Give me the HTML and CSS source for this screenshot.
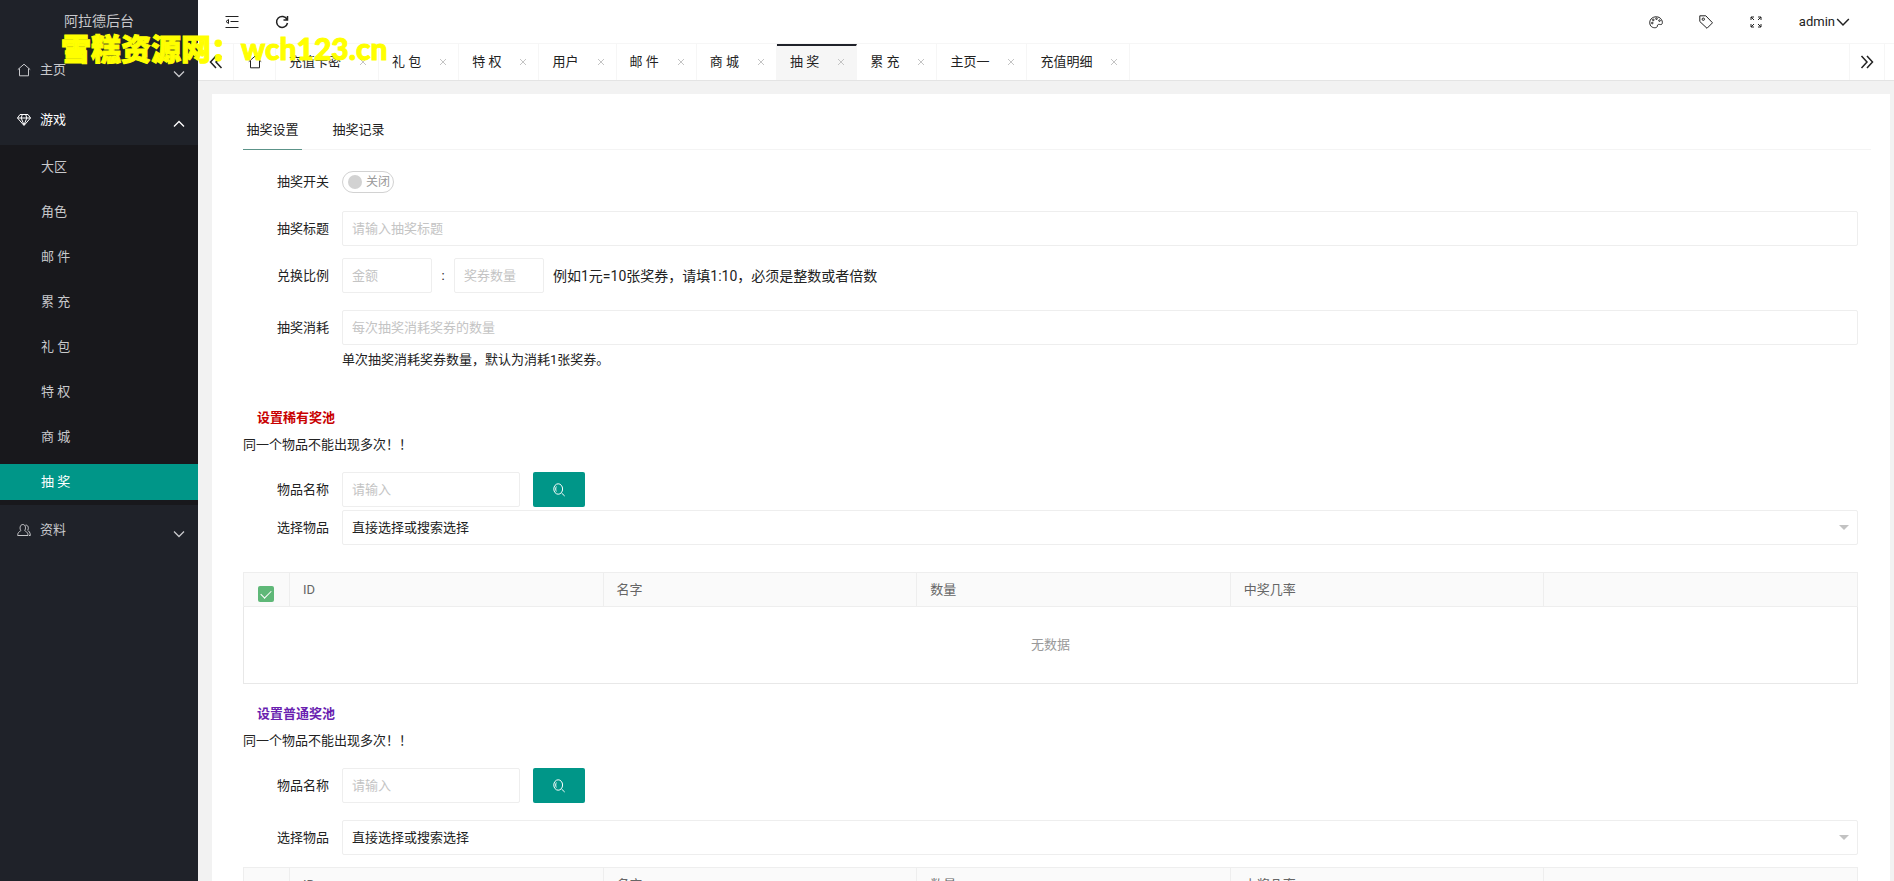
FILE: index.html
```html
<!DOCTYPE html>
<html lang="zh-CN">
<head>
<meta charset="utf-8">
<title>阿拉德后台</title>
<link rel="stylesheet" href="styles.css">
</head>
<body>
<svg class="sprite" aria-hidden="true">
  <symbol id="down" viewBox="0 0 12 12"><path d="M1 3.5 6 8.5 11 3.5"/></symbol>
  <symbol id="home" viewBox="0 0 14 14"><path d="M.8 6.6 7 1.2l6.2 5.4M2.5 5.5v7.3h9V5.5"/></symbol>
  <symbol id="close" viewBox="0 0 8 8"><path d="M1 1l6 6M7 1 1 7"/></symbol>
  <symbol id="search" viewBox="0 0 14 14"><ellipse cx="6.2" cy="6" rx="4.4" ry="5.2"/><path d="M9.5 10l3.200 3M4.300 3.500c-.8 1.500-.8 3.500 0 5"/></symbol>
</svg>
<div class="app">
  <aside class="side">
    <div class="logo">阿拉德后台</div>
    <nav class="nav">
      <a class="nav-item" href="#"><svg class="icon"><use href="#home"/></svg><span>主页</span><svg class="arrow"><use href="#down"/></svg></a>
      <a class="nav-item open" href="#"><svg class="icon" viewBox="0 0 14 14"><path d="M3 1.500h8L13.500 5 7 12.500.5 5zM.5 5h13M4.200 5 7 12l2.800-7M4.200 5 5.300 1.500M9.800 5 8.700 1.500"/></svg><span>游戏</span><svg class="arrow up"><use href="#down"/></svg></a>
      <div class="subnav">
        <a href="#">大区</a>
        <a href="#">角色</a>
        <a href="#">邮 件</a>
        <a href="#">累 充</a>
        <a href="#">礼 包</a>
        <a href="#">特 权</a>
        <a href="#">商 城</a>
        <a class="current" href="#">抽 奖</a>
      </div>
      <a class="nav-item" href="#"><svg class="icon" viewBox="0 0 14 14"><path d="M3.900 7.500C2.400 5.800 2.900 1.500 5.800 1.500s3.400 4.300 1.900 6c1 1.200 3.300 1.300 3.300 5H.7c0-3.700 2.200-3.800 3.200-5zM8.500 2.200c2.600-.6 3.600 3 2.200 5 1 1.100 2.600 1.800 2.600 5.300h-1.300"/></svg><span>资料</span><svg class="arrow"><use href="#down"/></svg></a>
    </nav>
  </aside>
  <div class="body">
    <header class="top">
      <button class="tool" aria-label="收起菜单"><svg class="icon" viewBox="0 0 14 14"><path d="M.5 1.500h13M5.500 6.500h8M.5 12.500h13M3.500 4.500 1 6.500l2.500 2z"/></svg></button>
      <button class="tool" aria-label="刷新"><svg class="icon bold" viewBox="0 0 14 14"><path d="M12 4.400A5.500 5.500 0 1 0 12.500 8M12.500 1v4h-4"/></svg></button>
      <span class="grow"></span>
      <button class="tool" aria-label="主题"><svg class="icon" viewBox="0 0 14 14"><path d="M3.500 12.300C.5 11 .3 7 1.300 5.200 3 1.500 8.500.8 11.300 3.200c2 1.800 2.400 4.200 1.800 5.600-.7 1.400-2.300.4-3.600.6-1.800.4-.6 2.400-2 3-1 .5-2.800.4-4-.1z"/><circle cx="3.300" cy="8" r=".8"/><circle cx="4.300" cy="4.900" r=".8"/><circle cx="7.500" cy="3.700" r=".8"/><circle cx="10.500" cy="5.600" r=".8"/></svg></button>
      <button class="tool" aria-label="便签"><svg class="icon" viewBox="0 0 14 14"><path d="M.8.8h6l6.700 7-5.500 5.500L.8 6.500z"/><circle cx="4.300" cy="4.200" r="1.200"/></svg></button>
      <button class="tool" aria-label="全屏"><svg class="icon" viewBox="0 0 14 14"><path d="M2 5V2h3M2 2l3 3M9 2h3v3M12 2 9 5M2 9v3h3M2 12l3-3M12 9v3H9M12 12 9 9"/></svg></button>
      <button class="user">admin<svg class="arrow"><use href="#down"/></svg></button>
    </header>
    <div class="tabs">
      <button class="tab-tool first" aria-label="向左"><svg class="icon bold" viewBox="0 0 14 14"><path d="M7 1 1.500 7 7 13M12.500 1 7 7l5.500 6"/></svg></button>
      <a class="tab home" href="#" aria-label="主页"><svg class="icon"><use href="#home"/></svg></a>
      <a class="tab" href="#">充值卡密<svg class="x"><use href="#close"/></svg></a>
      <a class="tab" href="#">礼 包<svg class="x"><use href="#close"/></svg></a>
      <a class="tab" href="#">特 权<svg class="x"><use href="#close"/></svg></a>
      <a class="tab" href="#">用户<svg class="x"><use href="#close"/></svg></a>
      <a class="tab" href="#">邮 件<svg class="x"><use href="#close"/></svg></a>
      <a class="tab" href="#">商 城<svg class="x"><use href="#close"/></svg></a>
      <a class="tab active" href="#">抽 奖<svg class="x"><use href="#close"/></svg></a>
      <a class="tab" href="#">累 充<svg class="x"><use href="#close"/></svg></a>
      <a class="tab" href="#">主页一<svg class="x"><use href="#close"/></svg></a>
      <a class="tab" href="#">充值明细<svg class="x"><use href="#close"/></svg></a>
      <span class="grow"></span>
      <button class="tab-tool last" aria-label="向右"><svg class="icon bold" viewBox="0 0 14 14"><path d="M7 1l5.500 6L7 13M1.500 1 7 7l-5.500 6"/></svg></button>
    </div>
    <main class="main">
      <div class="card">
        <div class="card-tabs"><a class="active" href="#">抽奖设置</a><a href="#">抽奖记录</a></div>
        <form class="form">
          <div class="row"><label for="switch">抽奖开关</label><span class="switch"><input type="checkbox" id="switch"><span>关闭</span></span></div>
          <div class="row"><label for="title">抽奖标题</label><input class="field" id="title" type="text" placeholder="请输入抽奖标题"></div>
          <div class="row"><label for="money">兑换比例</label><input class="field small" id="money" type="text" placeholder="金额"><span class="colon">:</span><input class="field small" type="text" aria-label="奖券数量" placeholder="奖券数量"><span class="example">例如1元=10张奖券&#65292;请填1:10&#65292;必须是整数或者倍数</span></div>
          <div class="row cost"><label for="cost">抽奖消耗</label><input class="field" id="cost" type="text" placeholder="每次抽奖消耗奖券的数量"></div>
          <p class="hint">单次抽奖消耗奖券数量&#65292;默认为消耗1张奖券。</p>

          <section class="pool rare">
            <h2>设置稀有奖池</h2>
            <p>同一个物品不能出现多次&#65281;&#65281;</p>
            <div class="row name"><label for="name1">物品名称</label><input class="field medium" id="name1" type="text" placeholder="请输入"><button class="search" type="button" aria-label="搜索"><svg class="icon"><use href="#search"/></svg></button></div>
            <div class="row pick"><label for="pick1">选择物品</label><span class="select"><select id="pick1"><option>直接选择或搜索选择</option></select></span></div>
            <table>
              <thead><tr><th class="check"><input type="checkbox" aria-label="全选" checked></th><th>ID</th><th>名字</th><th>数量</th><th>中奖几率</th><th class="rest"></th></tr></thead>
              <tbody><tr><td colspan="6">无数据</td></tr></tbody>
            </table>
          </section>

          <section class="pool common">
            <h2>设置普通奖池</h2>
            <p>同一个物品不能出现多次&#65281;&#65281;</p>
            <div class="row name"><label for="name2">物品名称</label><input class="field medium" id="name2" type="text" placeholder="请输入"><button class="search" type="button" aria-label="搜索"><svg class="icon"><use href="#search"/></svg></button></div>
            <div class="row pick"><label for="pick2">选择物品</label><span class="select"><select id="pick2"><option>直接选择或搜索选择</option></select></span></div>
            <table>
              <thead><tr><th class="check"><input type="checkbox" aria-label="全选" checked></th><th>ID</th><th>名字</th><th>数量</th><th>中奖几率</th><th class="rest"></th></tr></thead>
              <tbody><tr><td colspan="6">无数据</td></tr></tbody>
            </table>
          </section>
        </form>
      </div>
    </main>
  </div>
</div>
<div class="watermark">雪糕资源网&#65306;wch123.cn</div>
</body>
</html>
```
FILE: styles.css
```css
* { box-sizing: border-box; }
body, h2, p { margin: 0; }
body, button, input, select {
  font-family: Roboto, "Noto Sans CJK SC", sans-serif;
  font-size: 13px;
  color: #222;
}
body { line-height: 20px; background: #f2f2f2; }
a { color: inherit; text-decoration: none; }
button { padding: 0; border: 0; background: none; }
.sprite { display: none; }
svg { fill: none; stroke: currentColor; flex: none; }
.icon { width: 14px; height: 14px; }
.icon.bold { stroke-width: 1.5; }
.arrow { width: 12px; height: 12px; stroke-width: 1.3; }
.arrow.up { transform: rotate(180deg); }
.grow { flex: 1; }

.app { display: flex; height: 100vh; overflow: hidden; }
.side { width: 198px; flex: none; background: #1f2229; color: #c8c9cc; }
.logo { height: 45px; padding-top: 11px; font-size: 14px; text-align: center; }
.nav-item { display: flex; align-items: center; height: 50px; padding: 0 13px 0 17px; }
.nav-item .icon { margin-right: 9px; }
.nav-item .arrow { margin: 8px 0 0 auto; }
.nav-item.open { color: #fff; }
.subnav { display: flex; flex-direction: column; gap: 9px; padding: 4px 0 5px; background: #18181c; }
.subnav a { padding: 8px 0 8px 41px; }
.subnav .current { background: #009688; color: #fff; }

.body { display: flex; flex: 1; flex-direction: column; min-width: 0; }
.top { display: flex; align-items: center; height: 44px; padding: 0 44px 0 9px; background: #fff; border-bottom: 1px solid #f6f6f6; flex: none; }
.tool { display: flex; align-items: center; justify-content: center; width: 50px; height: 44px; }
.user { display: flex; align-items: center; gap: 1px; margin-left: 18px; }
.user .arrow { width: 14px; height: 14px; }
.tabs { display: flex; height: 37px; background: #fff; border-bottom: 1px solid #e4e4e4; flex: none; }
.tab-tool { display: flex; align-items: center; justify-content: center; width: 36px; }
.tab-tool.first { border-right: 1px solid #f6f6f6; }
.tab-tool.last { border: solid #f6f6f6; border-width: 0 1px; margin-right: 9px; }
.tab { display: flex; align-items: center; padding: 0 11px 0 13px; border-right: 1px solid #f6f6f6; }
.tab.home { padding: 0 13px 0 14px; }
.tab.active { background: #f6f6f6; border-top: 2px solid #20222a; padding-bottom: 2px; }
.tab .x { width: 8px; height: 8px; margin-left: 18px; color: #c4c4c4; }

.main { flex: 1; min-height: 0; padding: 13px 4px 13px 14px; overflow-y: auto; scrollbar-width: none; }
.card { padding: 16px 19px 24px 31px; background: #fff; }
.card-tabs { display: flex; gap: 27px; border-bottom: 1px solid #f4f4f4; }
.card-tabs a { width: 59px; padding: 10px 0 9px; margin-bottom: -1px; text-align: center; border-bottom: 1px solid transparent; }
.card-tabs .active { border-color: #5c9389; }
.form { padding: 14px 13px 0 0; }
.row { display: flex; align-items: center; height: 35px; margin-bottom: 12px; }
.row label { width: 99px; padding-right: 13px; text-align: right; flex: none; }
.row.cost { margin: 17px 0 5px; }
.hint { padding-left: 99px; }
.field, select { height: 35px; padding: 0 9px; border: 1px solid #eee; border-radius: 2px; background: #fff; outline: 0; }
.field { flex: 1; min-width: 0; }
.field::placeholder { color: #c4c4c4; }
.field.small { flex: 0 0 90px; }
.field.medium { flex: 0 0 178px; }
.colon { width: 22px; text-align: center; }
.example { margin-left: 9px; font-size: 14px; }
.switch { display: flex; align-items: center; gap: 4px; width: 52px; height: 22px; padding: 0 5px; border: 1px solid #d2d2d2; border-radius: 11px; font-size: 12px; color: #999; white-space: nowrap; }
.switch input { appearance: none; width: 14px; height: 14px; margin: 0; border-radius: 50%; background: #d2d2d2; flex: none; }

.pool { margin-top: 20px; }
.pool.rare { margin-top: 38px; }
.pool h2 { padding-left: 14px; margin-bottom: 7px; font-size: 13px; line-height: 20px; }
.rare h2 { color: #c80000; }
.common h2 { color: #6a1fb0; }
.row.name { margin: 17px 0 3px; }
.row.pick { margin-bottom: 27px; }
.common .row.pick { margin: 17px 0 12px; }
.search { display: flex; align-items: center; justify-content: center; width: 52px; height: 35px; margin-left: 13px; border-radius: 2px; background: #009688; color: #fff; }
.select { display: grid; flex: 1; align-items: center; }
.select::after { content: ""; grid-area: 1 / 1; justify-self: end; margin-right: 9px; border: 5px solid transparent; border-top-color: #c2c2c2; border-bottom: 0; pointer-events: none; }
select { grid-area: 1 / 1; width: 100%; appearance: none; }

table { width: 100%; border: 1px solid #e8e8e8; border-collapse: collapse; table-layout: fixed; }
th { height: 34px; padding: 0 13px; border: 1px solid #eee; background: #fafafa; color: #666; font-weight: 400; text-align: left; }
th.check { width: 46px; padding-left: 14px; }
th.check input { display: block; appearance: none; width: 16px; height: 16px; margin: 8px 0 0; border-radius: 2px; background: #5fb878; }
th.check input::before { content: ""; display: block; width: 9px; height: 5px; margin: 4px auto 0; border: solid #fff; border-width: 0 0 1px 1px; transform: rotate(-45deg); }
td { height: 77px; color: #999; text-align: center; }

.watermark { position: absolute; top: 28px; left: 61px; font: 900 30px/40px Lato, "Noto Sans CJK SC", sans-serif; color: #ff0; -webkit-text-stroke: 1px #ff0; white-space: nowrap; pointer-events: none; }
```
